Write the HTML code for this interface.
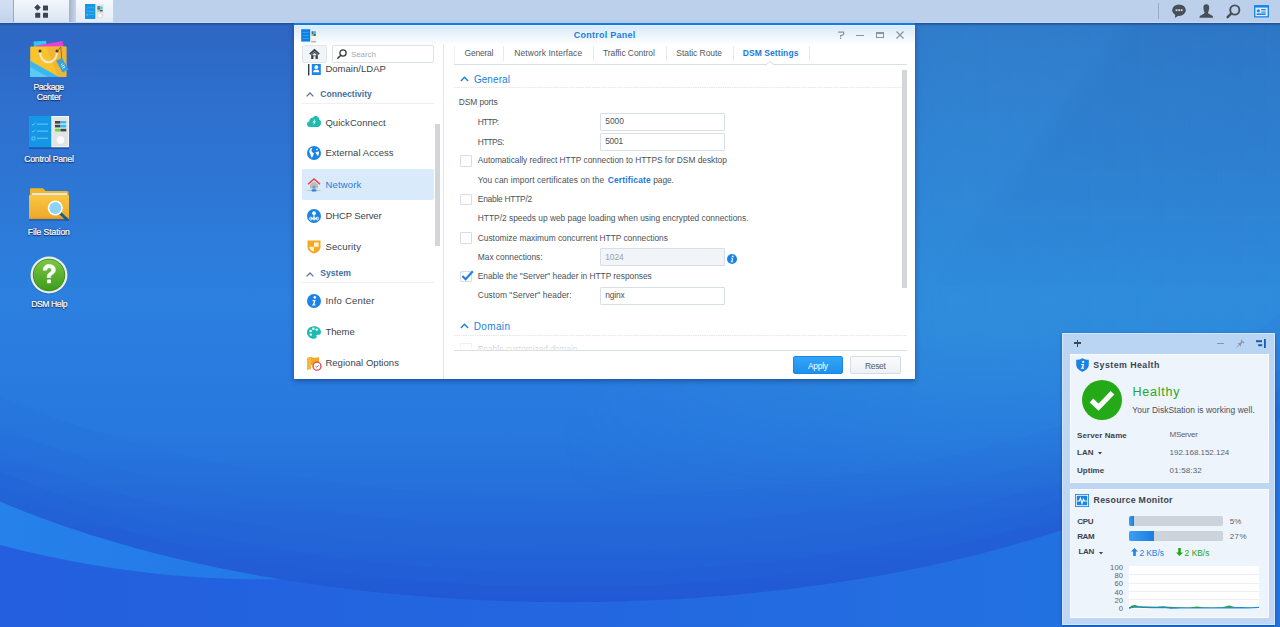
<!DOCTYPE html>
<html><head><meta charset="utf-8"><style>
*{margin:0;padding:0;box-sizing:border-box}
html,body{width:1280px;height:627px;overflow:hidden}
body{position:relative;font-family:"Liberation Sans",sans-serif;background:#2F70CE}
.a{position:absolute}
.t{position:absolute;white-space:nowrap}
svg{position:absolute;overflow:visible}
.dl{color:#fff;-webkit-text-stroke:0.2px #fff;text-shadow:0 1px 1px rgba(0,0,30,.7),0 0 2px rgba(0,0,30,.5)}
</style></head><body>
<div class="a" style="left:0;top:0;width:1280px;height:627px;background:linear-gradient(180deg,#2E66C2 22px,#2E70CE 110px,#2C80DF 300px,#2778DF 430px,#2670DB 490px,#2360D6 600px)"></div>
<div class="a" style="left:0;top:0;width:1280px;height:627px;background:linear-gradient(90deg,rgba(52,160,215,0) 560px,rgba(52,160,215,0.4) 950px,rgba(52,160,215,0.35) 1280px);-webkit-mask-image:linear-gradient(180deg,#000 0,#000 330px,transparent 500px)"></div>
<svg width="1280" height="627" style="left:0;top:0">
<defs><linearGradient id="gdiag" gradientUnits="userSpaceOnUse" x1="1094" y1="58" x2="1110" y2="70">
<stop offset="0" stop-color="#1A4A9A" stop-opacity="0"/><stop offset="1" stop-color="#1A4A9A" stop-opacity="0.07"/></linearGradient>
<linearGradient id="gdiagv" gradientUnits="userSpaceOnUse" x1="0" y1="150" x2="0" y2="290">
<stop offset="0" stop-color="#fff"/><stop offset="1" stop-color="#000"/></linearGradient>
<mask id="mdiag" maskUnits="userSpaceOnUse" x="0" y="0" width="1280" height="627"><rect x="0" y="0" width="1280" height="627" fill="url(#gdiagv)"/></mask></defs>
<rect x="880" y="22" width="400" height="420" fill="url(#gdiag)" mask="url(#mdiag)"/>
</svg>
<svg width="1280" height="627" style="left:0;top:0">
<defs>
<linearGradient id="gdark" gradientUnits="userSpaceOnUse" x1="0" y1="470" x2="0" y2="606">
<stop offset="0" stop-color="#2560D8" stop-opacity="0"/>
<stop offset="1" stop-color="#215CD4" stop-opacity="1"/>
</linearGradient>
<linearGradient id="glow" gradientUnits="userSpaceOnUse" x1="0" y1="0" x2="1100" y2="0">
<stop offset="0" stop-color="#235FDE"/><stop offset="0.55" stop-color="#2367E0"/><stop offset="1" stop-color="#2272E1"/>
</linearGradient>
<linearGradient id="gdarkh" gradientUnits="userSpaceOnUse" x1="0" y1="0" x2="1100" y2="0">
<stop offset="0" stop-color="#215AD4"/><stop offset="0.6" stop-color="#215CD4"/><stop offset="1" stop-color="#2468D9"/>
</linearGradient>
<mask id="mdark" maskUnits="userSpaceOnUse" x="0" y="0" width="1280" height="627">
<rect x="0" y="0" width="1280" height="627" fill="url(#gmask)"/>
</mask>
<linearGradient id="gmask" gradientUnits="userSpaceOnUse" x1="0" y1="480" x2="0" y2="606">
<stop offset="0" stop-color="#000"/><stop offset="0.7" stop-color="#777"/><stop offset="1" stop-color="#fff"/>
</linearGradient>
<linearGradient id="gband" gradientUnits="userSpaceOnUse" x1="0" y1="0" x2="280" y2="0">
<stop offset="0" stop-color="#2681EA"/><stop offset="1" stop-color="#2378E7"/>
</linearGradient>
</defs>
<path d="M0,486.5 L16,493.1 L32,499.4 L48,505.4 L64,511.1 L80,516.4 L96,521.5 L112,526.4 L128,531.0 L144,535.3 L160,539.5 L176,543.4 L192,547.2 L208,550.7 L224,554.0 L240,557.2 L256,560.1 L272,562.9 L288,565.6 L304,568.0 L320,570.3 L336,572.5 L352,574.5 L368,576.3 L384,578.0 L400,579.5 L416,580.9 L432,582.2 L448,583.3 L464,584.3 L480,585.1 L496,585.8 L512,586.3 L528,586.8 L544,587.0 L560,587.2 L576,587.2 L592,587.1 L608,586.8 L624,586.4 L640,585.8 L656,585.2 L672,584.4 L688,583.4 L704,582.3 L720,581.1 L736,579.7 L752,578.2 L768,576.5 L784,574.7 L800,572.7 L816,570.6 L832,568.3 L848,565.8 L864,563.2 L880,560.4 L896,557.5 L912,554.3 L928,551.0 L944,547.5 L960,543.8 L976,539.9 L992,535.8 L1008,531.4 L1024,526.8 L1040,522.0 L1056,516.9 L1072,511.6 L1088,506.0 L1104,500.0 L1120,493.7 L1136,487.1 L1152,480.1 L1168,472.7 L1184,464.8 L1200,456.4 L1216,447.4 L1232,437.8 L1248,427.4 L1264,416.1 L1280,403.7 L1280,418.7 L1264,431.1 L1248,442.4 L1232,452.8 L1216,462.4 L1200,471.4 L1184,479.8 L1168,487.7 L1152,495.1 L1136,502.1 L1120,508.7 L1104,515.0 L1088,521.0 L1072,526.6 L1056,531.9 L1040,537.0 L1024,541.8 L1008,546.4 L992,550.8 L976,554.9 L960,558.8 L944,562.5 L928,566.0 L912,569.3 L896,572.5 L880,575.4 L864,578.2 L848,580.8 L832,583.3 L816,585.6 L800,587.7 L784,589.7 L768,591.5 L752,593.2 L736,594.7 L720,596.1 L704,597.3 L688,598.4 L672,599.4 L656,600.2 L640,600.8 L624,601.4 L608,601.8 L592,602.1 L576,602.2 L560,602.2 L544,602.0 L528,601.8 L512,601.3 L496,600.8 L480,600.1 L464,599.3 L448,598.3 L432,597.2 L416,595.9 L400,594.5 L384,593.0 L368,591.3 L352,589.5 L336,587.5 L320,585.3 L304,583.0 L288,580.6 L272,577.9 L256,575.1 L240,572.2 L224,569.0 L208,565.7 L192,562.2 L176,558.4 L160,554.5 L144,550.3 L128,546.0 L112,541.4 L96,536.5 L80,531.4 L64,526.1 L48,520.4 L32,514.4 L16,508.1 L0,501.5 Z" fill="#2058D4" fill-opacity="0.18"/>
<path d="M0,471.5 L16,478.1 L32,484.4 L48,490.4 L64,496.1 L80,501.4 L96,506.5 L112,511.4 L128,516.0 L144,520.3 L160,524.5 L176,528.4 L192,532.2 L208,535.7 L224,539.0 L240,542.2 L256,545.1 L272,547.9 L288,550.6 L304,553.0 L320,555.3 L336,557.5 L352,559.5 L368,561.3 L384,563.0 L400,564.5 L416,565.9 L432,567.2 L448,568.3 L464,569.3 L480,570.1 L496,570.8 L512,571.3 L528,571.8 L544,572.0 L560,572.2 L576,572.2 L592,572.1 L608,571.8 L624,571.4 L640,570.8 L656,570.2 L672,569.4 L688,568.4 L704,567.3 L720,566.1 L736,564.7 L752,563.2 L768,561.5 L784,559.7 L800,557.7 L816,555.6 L832,553.3 L848,550.8 L864,548.2 L880,545.4 L896,542.5 L912,539.3 L928,536.0 L944,532.5 L960,528.8 L976,524.9 L992,520.8 L1008,516.4 L1024,511.8 L1040,507.0 L1056,501.9 L1072,496.6 L1088,491.0 L1104,485.0 L1120,478.7 L1136,472.1 L1152,465.1 L1168,457.7 L1184,449.8 L1200,441.4 L1216,432.4 L1232,422.8 L1248,412.4 L1264,401.1 L1280,388.7 L1280,418.7 L1264,431.1 L1248,442.4 L1232,452.8 L1216,462.4 L1200,471.4 L1184,479.8 L1168,487.7 L1152,495.1 L1136,502.1 L1120,508.7 L1104,515.0 L1088,521.0 L1072,526.6 L1056,531.9 L1040,537.0 L1024,541.8 L1008,546.4 L992,550.8 L976,554.9 L960,558.8 L944,562.5 L928,566.0 L912,569.3 L896,572.5 L880,575.4 L864,578.2 L848,580.8 L832,583.3 L816,585.6 L800,587.7 L784,589.7 L768,591.5 L752,593.2 L736,594.7 L720,596.1 L704,597.3 L688,598.4 L672,599.4 L656,600.2 L640,600.8 L624,601.4 L608,601.8 L592,602.1 L576,602.2 L560,602.2 L544,602.0 L528,601.8 L512,601.3 L496,600.8 L480,600.1 L464,599.3 L448,598.3 L432,597.2 L416,595.9 L400,594.5 L384,593.0 L368,591.3 L352,589.5 L336,587.5 L320,585.3 L304,583.0 L288,580.6 L272,577.9 L256,575.1 L240,572.2 L224,569.0 L208,565.7 L192,562.2 L176,558.4 L160,554.5 L144,550.3 L128,546.0 L112,541.4 L96,536.5 L80,531.4 L64,526.1 L48,520.4 L32,514.4 L16,508.1 L0,501.5 Z" fill="#2058D4" fill-opacity="0.14"/>
<path d="M0,451.5 L16,458.1 L32,464.4 L48,470.4 L64,476.1 L80,481.4 L96,486.5 L112,491.4 L128,496.0 L144,500.3 L160,504.5 L176,508.4 L192,512.2 L208,515.7 L224,519.0 L240,522.2 L256,525.1 L272,527.9 L288,530.6 L304,533.0 L320,535.3 L336,537.5 L352,539.5 L368,541.3 L384,543.0 L400,544.5 L416,545.9 L432,547.2 L448,548.3 L464,549.3 L480,550.1 L496,550.8 L512,551.3 L528,551.8 L544,552.0 L560,552.2 L576,552.2 L592,552.1 L608,551.8 L624,551.4 L640,550.8 L656,550.2 L672,549.4 L688,548.4 L704,547.3 L720,546.1 L736,544.7 L752,543.2 L768,541.5 L784,539.7 L800,537.7 L816,535.6 L832,533.3 L848,530.8 L864,528.2 L880,525.4 L896,522.5 L912,519.3 L928,516.0 L944,512.5 L960,508.8 L976,504.9 L992,500.8 L1008,496.4 L1024,491.8 L1040,487.0 L1056,481.9 L1072,476.6 L1088,471.0 L1104,465.0 L1120,458.7 L1136,452.1 L1152,445.1 L1168,437.7 L1184,429.8 L1200,421.4 L1216,412.4 L1232,402.8 L1248,392.4 L1264,381.1 L1280,368.7 L1280,418.7 L1264,431.1 L1248,442.4 L1232,452.8 L1216,462.4 L1200,471.4 L1184,479.8 L1168,487.7 L1152,495.1 L1136,502.1 L1120,508.7 L1104,515.0 L1088,521.0 L1072,526.6 L1056,531.9 L1040,537.0 L1024,541.8 L1008,546.4 L992,550.8 L976,554.9 L960,558.8 L944,562.5 L928,566.0 L912,569.3 L896,572.5 L880,575.4 L864,578.2 L848,580.8 L832,583.3 L816,585.6 L800,587.7 L784,589.7 L768,591.5 L752,593.2 L736,594.7 L720,596.1 L704,597.3 L688,598.4 L672,599.4 L656,600.2 L640,600.8 L624,601.4 L608,601.8 L592,602.1 L576,602.2 L560,602.2 L544,602.0 L528,601.8 L512,601.3 L496,600.8 L480,600.1 L464,599.3 L448,598.3 L432,597.2 L416,595.9 L400,594.5 L384,593.0 L368,591.3 L352,589.5 L336,587.5 L320,585.3 L304,583.0 L288,580.6 L272,577.9 L256,575.1 L240,572.2 L224,569.0 L208,565.7 L192,562.2 L176,558.4 L160,554.5 L144,550.3 L128,546.0 L112,541.4 L96,536.5 L80,531.4 L64,526.1 L48,520.4 L32,514.4 L16,508.1 L0,501.5 Z" fill="#2058D4" fill-opacity="0.1"/>
<path d="M0,426.5 L16,433.1 L32,439.4 L48,445.4 L64,451.1 L80,456.4 L96,461.5 L112,466.4 L128,471.0 L144,475.3 L160,479.5 L176,483.4 L192,487.2 L208,490.7 L224,494.0 L240,497.2 L256,500.1 L272,502.9 L288,505.6 L304,508.0 L320,510.3 L336,512.5 L352,514.5 L368,516.3 L384,518.0 L400,519.5 L416,520.9 L432,522.2 L448,523.3 L464,524.3 L480,525.1 L496,525.8 L512,526.3 L528,526.8 L544,527.0 L560,527.2 L576,527.2 L592,527.1 L608,526.8 L624,526.4 L640,525.8 L656,525.2 L672,524.4 L688,523.4 L704,522.3 L720,521.1 L736,519.7 L752,518.2 L768,516.5 L784,514.7 L800,512.7 L816,510.6 L832,508.3 L848,505.8 L864,503.2 L880,500.4 L896,497.5 L912,494.3 L928,491.0 L944,487.5 L960,483.8 L976,479.9 L992,475.8 L1008,471.4 L1024,466.8 L1040,462.0 L1056,456.9 L1072,451.6 L1088,446.0 L1104,440.0 L1120,433.7 L1136,427.1 L1152,420.1 L1168,412.7 L1184,404.8 L1200,396.4 L1216,387.4 L1232,377.8 L1248,367.4 L1264,356.1 L1280,343.7 L1280,418.7 L1264,431.1 L1248,442.4 L1232,452.8 L1216,462.4 L1200,471.4 L1184,479.8 L1168,487.7 L1152,495.1 L1136,502.1 L1120,508.7 L1104,515.0 L1088,521.0 L1072,526.6 L1056,531.9 L1040,537.0 L1024,541.8 L1008,546.4 L992,550.8 L976,554.9 L960,558.8 L944,562.5 L928,566.0 L912,569.3 L896,572.5 L880,575.4 L864,578.2 L848,580.8 L832,583.3 L816,585.6 L800,587.7 L784,589.7 L768,591.5 L752,593.2 L736,594.7 L720,596.1 L704,597.3 L688,598.4 L672,599.4 L656,600.2 L640,600.8 L624,601.4 L608,601.8 L592,602.1 L576,602.2 L560,602.2 L544,602.0 L528,601.8 L512,601.3 L496,600.8 L480,600.1 L464,599.3 L448,598.3 L432,597.2 L416,595.9 L400,594.5 L384,593.0 L368,591.3 L352,589.5 L336,587.5 L320,585.3 L304,583.0 L288,580.6 L272,577.9 L256,575.1 L240,572.2 L224,569.0 L208,565.7 L192,562.2 L176,558.4 L160,554.5 L144,550.3 L128,546.0 L112,541.4 L96,536.5 L80,531.4 L64,526.1 L48,520.4 L32,514.4 L16,508.1 L0,501.5 Z" fill="#2058D4" fill-opacity="0.08"/>
<path d="M0,396.5 L16,403.1 L32,409.4 L48,415.4 L64,421.1 L80,426.4 L96,431.5 L112,436.4 L128,441.0 L144,445.3 L160,449.5 L176,453.4 L192,457.2 L208,460.7 L224,464.0 L240,467.2 L256,470.1 L272,472.9 L288,475.6 L304,478.0 L320,480.3 L336,482.5 L352,484.5 L368,486.3 L384,488.0 L400,489.5 L416,490.9 L432,492.2 L448,493.3 L464,494.3 L480,495.1 L496,495.8 L512,496.3 L528,496.8 L544,497.0 L560,497.2 L576,497.2 L592,497.1 L608,496.8 L624,496.4 L640,495.8 L656,495.2 L672,494.4 L688,493.4 L704,492.3 L720,491.1 L736,489.7 L752,488.2 L768,486.5 L784,484.7 L800,482.7 L816,480.6 L832,478.3 L848,475.8 L864,473.2 L880,470.4 L896,467.5 L912,464.3 L928,461.0 L944,457.5 L960,453.8 L976,449.9 L992,445.8 L1008,441.4 L1024,436.8 L1040,432.0 L1056,426.9 L1072,421.6 L1088,416.0 L1104,410.0 L1120,403.7 L1136,397.1 L1152,390.1 L1168,382.7 L1184,374.8 L1200,366.4 L1216,357.4 L1232,347.8 L1248,337.4 L1264,326.1 L1280,313.7 L1280,418.7 L1264,431.1 L1248,442.4 L1232,452.8 L1216,462.4 L1200,471.4 L1184,479.8 L1168,487.7 L1152,495.1 L1136,502.1 L1120,508.7 L1104,515.0 L1088,521.0 L1072,526.6 L1056,531.9 L1040,537.0 L1024,541.8 L1008,546.4 L992,550.8 L976,554.9 L960,558.8 L944,562.5 L928,566.0 L912,569.3 L896,572.5 L880,575.4 L864,578.2 L848,580.8 L832,583.3 L816,585.6 L800,587.7 L784,589.7 L768,591.5 L752,593.2 L736,594.7 L720,596.1 L704,597.3 L688,598.4 L672,599.4 L656,600.2 L640,600.8 L624,601.4 L608,601.8 L592,602.1 L576,602.2 L560,602.2 L544,602.0 L528,601.8 L512,601.3 L496,600.8 L480,600.1 L464,599.3 L448,598.3 L432,597.2 L416,595.9 L400,594.5 L384,593.0 L368,591.3 L352,589.5 L336,587.5 L320,585.3 L304,583.0 L288,580.6 L272,577.9 L256,575.1 L240,572.2 L224,569.0 L208,565.7 L192,562.2 L176,558.4 L160,554.5 L144,550.3 L128,546.0 L112,541.4 L96,536.5 L80,531.4 L64,526.1 L48,520.4 L32,514.4 L16,508.1 L0,501.5 Z" fill="#2058D4" fill-opacity="0.06"/>

<path d="M0,501.5 L8,504.8 L16,508.1 L24,511.3 L32,514.4 L40,517.5 L48,520.4 L56,523.3 L64,526.1 L72,528.8 L80,531.4 L88,534.0 L96,536.5 L104,539.0 L112,541.4 L120,543.7 L128,546.0 L136,548.2 L144,550.3 L152,552.4 L160,554.5 L168,556.5 L176,558.4 L184,560.3 L192,562.2 L200,563.9 L208,565.7 L216,567.4 L224,569.0 L232,570.6 L240,572.2 L248,573.7 L256,575.1 L264,576.6 L272,577.9 L280,579.3 L288,580.6 L296,581.8 L304,583.0 L312,584.2 L320,585.3 L328,586.4 L336,587.5 L344,588.5 L352,589.5 L360,590.4 L368,591.3 L376,592.2 L384,593.0 L392,593.8 L400,594.5 L408,595.3 L416,595.9 L424,596.6 L432,597.2 L440,597.8 L448,598.3 L456,598.8 L464,599.3 L472,599.7 L480,600.1 L488,600.5 L496,600.8 L504,601.1 L512,601.3 L520,601.6 L528,601.8 L536,601.9 L544,602.0 L552,602.1 L560,602.2 L568,602.2 L576,602.2 L584,602.1 L592,602.1 L600,601.9 L608,601.8 L616,601.6 L624,601.4 L632,601.1 L640,600.8 L648,600.5 L656,600.2 L664,599.8 L672,599.4 L680,598.9 L688,598.4 L696,597.9 L704,597.3 L712,596.7 L720,596.1 L728,595.4 L736,594.7 L744,593.9 L752,593.2 L760,592.3 L768,591.5 L776,590.6 L784,589.7 L792,588.7 L800,587.7 L808,586.6 L816,585.6 L824,584.4 L832,583.3 L840,582.1 L848,580.8 L856,579.5 L864,578.2 L872,576.8 L880,575.4 L888,574.0 L896,572.5 L904,570.9 L912,569.3 L920,567.7 L928,566.0 L936,564.3 L944,562.5 L952,560.7 L960,558.8 L968,556.9 L976,554.9 L984,552.8 L992,550.8 L1000,548.6 L1008,546.4 L1016,544.1 L1024,541.8 L1032,539.5 L1040,537.0 L1048,534.5 L1056,531.9 L1064,529.3 L1072,526.6 L1080,523.8 L1088,521.0 L1096,518.0 L1104,515.0 L1112,511.9 L1120,508.7 L1128,505.5 L1136,502.1 L1144,498.7 L1152,495.1 L1160,491.5 L1168,487.7 L1176,483.8 L1184,479.8 L1192,475.7 L1200,471.4 L1208,467.0 L1216,462.4 L1224,457.7 L1232,452.8 L1240,447.7 L1248,442.4 L1256,436.9 L1264,431.1 L1272,425.1 L1280,418.7 L1280,627 L0,627 Z" fill="url(#glow)"/>
<path d="M0,501.5 L5,503.6 L10,505.7 L15,507.7 L20,509.7 L25,511.7 L30,513.7 L35,515.6 L40,517.5 L45,519.3 L50,521.1 L55,522.9 L60,524.7 L65,526.4 L70,528.1 L75,529.8 L80,531.4 L85,533.1 L90,534.7 L95,536.2 L100,537.8 L105,539.3 L110,540.8 L115,542.3 L120,543.7 L125,545.1 L130,546.5 L135,547.9 L140,549.3 L145,550.6 L150,551.9 L155,553.2 L160,554.5 L165,555.7 L170,557.0 L175,558.2 L180,559.4 L185,560.5 L190,561.7 L195,562.8 L200,563.9 L205,565.0 L210,566.1 L215,567.2 L220,568.2 L225,569.2 L230,570.2 L235,571.2 L240,572.2 L245,573.1 L250,574.1 L255,575.0 L260,575.9 L265,576.7 L270,577.6 L275,578.5 L280,579.3 L280,579.2 L275,579.2 L270,579.3 L265,579.3 L260,579.3 L255,579.3 L250,579.2 L245,579.1 L240,579.0 L235,578.9 L230,578.7 L225,578.5 L220,578.3 L215,578.1 L210,577.9 L205,577.6 L200,577.3 L195,577.0 L190,576.6 L185,576.2 L180,575.8 L175,575.4 L170,575.0 L165,574.5 L160,574.0 L155,573.5 L150,572.9 L145,572.3 L140,571.7 L135,571.1 L130,570.5 L125,569.8 L120,569.1 L115,568.4 L110,567.6 L105,566.9 L100,566.1 L95,565.2 L90,564.4 L85,563.5 L80,562.6 L75,561.7 L70,560.8 L65,559.8 L60,558.8 L55,557.8 L50,556.7 L45,555.7 L40,554.6 L35,553.5 L30,552.3 L25,551.2 L20,550.0 L15,548.8 L10,547.5 L5,546.3 L0,545.0 Z" fill="url(#gband)"/>
</svg>
<div class="a" style="left:0px;top:0px;width:1280px;height:23px;background:#BDD0EB;border-bottom:1px solid #C9D9EE"></div>
<div class="a" style="left:0px;top:23px;width:1280px;height:3px;background:linear-gradient(180deg,#1F4C98,rgba(45,104,198,0))"></div>
<div class="a" style="left:0px;top:0px;width:13px;height:22px;background:linear-gradient(180deg,#D3E0F1,#C2D4EC)"></div>
<div class="a" style="left:12.5px;top:0px;width:1px;height:22px;background:#98A8BE"></div>
<div class="a" style="left:14px;top:0px;width:55px;height:22px;background:linear-gradient(180deg,#F3F6FB,#DAE5F3)"></div>
<div class="a" style="left:69px;top:0px;width:7px;height:22px;background:linear-gradient(90deg,#A3B3CA,#C9D6E8)"></div>
<div class="a" style="left:76px;top:0px;width:37px;height:22px;background:linear-gradient(180deg,#F6F9FD,#E3ECF7)"></div>
<div class="a" style="left:113px;top:0px;width:1px;height:22px;background:#C5D2E2"></div>
<svg width="16" height="15" style="left:33.5px;top:3.5px" viewBox="0 0 16 15">
<rect x="1.2" y="1.2" width="4.6" height="4.6" fill="#3C4450" transform="rotate(45 3.5 3.5)"/>
<rect x="9" y="1.5" width="5" height="5" rx="0.6" fill="#3C4450"/>
<rect x="1.2" y="8.8" width="5" height="5" rx="0.6" fill="#3C4450"/>
<rect x="9" y="8.8" width="5" height="5" rx="0.6" fill="#3C4450"/>
</svg>
<svg width="19" height="15" style="left:85px;top:4px" viewBox="0 0 40 31.3" preserveAspectRatio="none">
<rect x="0" y="0" width="22.3" height="31.3" fill="#1497E7"/>
<rect x="22.3" y="0" width="17.7" height="31.3" fill="#F4F4F4"/>
<rect x="23.5" y="1" width="15.5" height="29.3" fill="#E2E3E4"/>
<rect x="26" y="5" width="5.5" height="2.6" fill="#3E4650"/><rect x="31.5" y="5" width="5.8" height="2.6" rx="1" fill="#27C3F4"/>
<rect x="26" y="8.8" width="5.5" height="2.6" fill="#3E4650"/><rect x="31.5" y="8.8" width="5.8" height="2.6" rx="1" fill="#27C3F4"/>
<rect x="26" y="12.8" width="5.5" height="2.6" rx="1" fill="#5BE02F"/><rect x="31.5" y="12.8" width="5.8" height="2.6" fill="#3E4650"/>
<circle cx="31.5" cy="24" r="4.4" fill="#FAFAFA" stroke="#D4D6D8" stroke-width="0.6"/>
<path d="M3,8 l1.2,1.2 l2.4,-2.6" stroke="#6CCBF7" stroke-width="0.9" fill="none"/>
<rect x="8" y="7.6" width="11" height="1" fill="#6CCBF7"/>
<path d="M3,15 l1.2,1.2 l2.4,-2.6" stroke="#6CCBF7" stroke-width="0.9" fill="none"/>
<rect x="8" y="14.6" width="11" height="1" fill="#6CCBF7"/>
<rect x="3" y="21" width="3" height="3" stroke="#6CCBF7" stroke-width="0.8" fill="none"/>
<rect x="8" y="21.8" width="11" height="1" fill="#6CCBF7"/>
</svg>
<div class="a" style="left:1158px;top:3px;width:1px;height:16px;background:#9AAAC0"></div>
<svg width="15" height="15" style="left:1172px;top:4px" viewBox="0 0 15 15">
<ellipse cx="7" cy="6.2" rx="6.8" ry="5.8" fill="#474E58"/>
<path d="M3.5,10 L2.8,14 L7.5,11 Z" fill="#474E58"/>
<rect x="3.6" y="5.3" width="1.8" height="1.8" fill="#D5DEEA"/>
<rect x="6.2" y="5.3" width="1.8" height="1.8" fill="#D5DEEA"/>
<rect x="8.8" y="5.3" width="1.8" height="1.8" fill="#D5DEEA"/>
</svg>
<svg width="15" height="15" style="left:1199px;top:4px" viewBox="0 0 15 15">
<path d="M7.3,0.3 C5,0.3 4.4,2 4.4,3.8 C4.4,5.8 5.2,7.6 5.6,8.6 C5.8,9.4 4.6,10.2 2.6,11 C0.8,11.8 0.4,12.6 0.4,13.8 L14.2,13.8 C14.2,12.6 13.8,11.8 12,11 C10,10.2 8.8,9.4 9,8.6 C9.4,7.6 10.2,5.8 10.2,3.8 C10.2,2 9.6,0.3 7.3,0.3 Z" fill="#474E58"/>
</svg>
<svg width="15" height="15" style="left:1226px;top:4px" viewBox="0 0 15 15">
<circle cx="8.8" cy="6" r="4.6" fill="none" stroke="#474E58" stroke-width="1.9"/>
<path d="M5.4,9.4 L1.6,13.2" stroke="#474E58" stroke-width="2.4" stroke-linecap="round"/>
</svg>
<svg width="15" height="12.5" style="left:1254px;top:4.5px" viewBox="0 0 15 12.5">
<rect x="0" y="0" width="15" height="12.5" rx="0.6" fill="#1A86E8"/>
<rect x="1.4" y="2.6" width="12.2" height="8.6" fill="#E4EEF8"/>
<circle cx="4.3" cy="5.8" r="1.6" fill="#1A86E8"/>
<rect x="7.2" y="4" width="4.6" height="1.3" fill="#1A86E8"/>
<rect x="7.2" y="6.5" width="4.6" height="1.1" fill="#1A86E8"/>
<rect x="2.6" y="8.4" width="9.2" height="1.6" fill="#1A86E8"/>
</svg>
<svg width="46" height="44" style="left:26px;top:36px" viewBox="0 0 46 44">
<path d="M7.5,5.5 L20,4.8 L21,11 L8,11 Z" fill="#35C6F0"/>
<path d="M9.6,9.8 L36.5,5 L37.6,10.6 L10.4,11.8 Z" fill="#E63FDC"/>
<rect x="4.2" y="10.4" width="36.2" height="30.6" rx="1" fill="#F7C52A"/>
<path d="M20,10.4 L40.4,10.4 L40.4,41 L32,41 Z" fill="#F2AE37" opacity="0.75"/>
<path d="M4.2,24.8 L33,41 L4.2,41 Z" fill="#3DB5EE"/>
<path d="M4.2,31 L22,41 L4.2,41 Z" fill="#5ACBF6"/>
<path d="M14,15.2 C14,30 31,30 31,15.2" fill="none" stroke="#F4E6D6" stroke-width="2"/>
<circle cx="14" cy="15" r="1.5" fill="#4A2F12"/><circle cx="31" cy="15" r="1.5" fill="#4A2F12"/>
<path d="M31,15.4 L34.8,11 L35.8,24" fill="none" stroke="#8A6A28" stroke-width="0.9"/>
<path d="M30.2,24.8 L36,22 L42.6,33.6 L36.6,36.6 Z" fill="#2AA6EA"/>
<circle cx="34.2" cy="25.4" r="0.9" fill="#E07A22"/>
<path d="M35,28.6 L36.6,27.8 M35.6,30.4 L38.4,29 M36.4,32.2 L39,30.8" stroke="#fff" stroke-width="0.9"/>
</svg>
<div class="t dl" style="left:33.4px;top:83.00px;font-size:8.6px;line-height:8.6px;color:#fff;letter-spacing:-0.461px;">Package</div>
<div class="t dl" style="left:36.8px;top:93.00px;font-size:8.6px;line-height:8.6px;color:#fff;letter-spacing:-0.263px;">Center</div>
<div class="a" style="left:29px;top:147px;width:40px;height:2px;background:rgba(20,40,110,.45)"></div>
<svg width="40" height="31.3" style="left:29px;top:115.7px" viewBox="0 0 40 31.3" preserveAspectRatio="none">
<rect x="0" y="0" width="22.3" height="31.3" fill="#1497E7"/>
<rect x="22.3" y="0" width="17.7" height="31.3" fill="#F4F4F4"/>
<rect x="23.5" y="1" width="15.5" height="29.3" fill="#E2E3E4"/>
<rect x="26" y="5" width="5.5" height="2.6" fill="#3E4650"/><rect x="31.5" y="5" width="5.8" height="2.6" rx="1" fill="#27C3F4"/>
<rect x="26" y="8.8" width="5.5" height="2.6" fill="#3E4650"/><rect x="31.5" y="8.8" width="5.8" height="2.6" rx="1" fill="#27C3F4"/>
<rect x="26" y="12.8" width="5.5" height="2.6" rx="1" fill="#5BE02F"/><rect x="31.5" y="12.8" width="5.8" height="2.6" fill="#3E4650"/>
<circle cx="31.5" cy="24" r="4.4" fill="#FAFAFA" stroke="#D4D6D8" stroke-width="0.6"/>
<path d="M3,8 l1.2,1.2 l2.4,-2.6" stroke="#6CCBF7" stroke-width="0.9" fill="none"/>
<rect x="8" y="7.6" width="11" height="1" fill="#6CCBF7"/>
<path d="M3,15 l1.2,1.2 l2.4,-2.6" stroke="#6CCBF7" stroke-width="0.9" fill="none"/>
<rect x="8" y="14.6" width="11" height="1" fill="#6CCBF7"/>
<rect x="3" y="21" width="3" height="3" stroke="#6CCBF7" stroke-width="0.8" fill="none"/>
<rect x="8" y="21.8" width="11" height="1" fill="#6CCBF7"/>
</svg>
<div class="t dl" style="left:24.2px;top:155.00px;font-size:8.6px;line-height:8.6px;color:#fff;letter-spacing:-0.192px;">Control Panel</div>
<svg width="41" height="34" style="left:29px;top:188px" viewBox="0 0 41 34">
<path d="M1,1.5 Q1,0.2 2.2,0.2 L14,0.2 L16.5,3 L38,3 Q39.5,3 39.5,4.5 L39.5,8 L1,8 Z" fill="#F1B52C"/>
<rect x="3" y="5" width="35" height="5" fill="#E6E6E6"/>
<defs><linearGradient id="fg" x1="0" y1="0" x2="0" y2="1"><stop offset="0" stop-color="#FAC640"/><stop offset="1" stop-color="#EEA82B"/></linearGradient></defs>
<path d="M0,8 Q0,7 1,7 L39,7 Q40,7 40,8 L40,31 L0,31 Z" fill="url(#fg)"/>
<rect x="0" y="29.6" width="40" height="1.6" fill="#DE9C1E"/>
<rect x="0" y="31.2" width="40" height="1.4" fill="rgba(20,40,110,.4)"/>
<path d="M31,25 L38,31.5" stroke="#1B5D86" stroke-width="3" stroke-linecap="round"/>
<circle cx="26.3" cy="20" r="7.6" fill="#FFFFFF"/>
<circle cx="26.3" cy="20" r="6" fill="#8ED3F5"/>
</svg>
<div class="t dl" style="left:27.8px;top:228.00px;font-size:8.6px;line-height:8.6px;color:#fff;letter-spacing:-0.084px;">File Station</div>
<svg width="38" height="38" style="left:30px;top:256px" viewBox="0 0 38 38">
<defs><linearGradient id="hg" x1="0" y1="0" x2="0" y2="1"><stop offset="0" stop-color="#7CC641"/><stop offset="1" stop-color="#3E9B1E"/></linearGradient></defs>
<circle cx="19" cy="19.6" r="18.6" fill="rgba(20,40,110,.35)"/>
<circle cx="19" cy="19" r="18.5" fill="#E8EEF0"/>
<circle cx="19" cy="19" r="16.2" fill="#3C8E1E"/><circle cx="19" cy="19" r="15.4" fill="url(#hg)"/>
<path stroke="#FFFFFF" stroke-width="0.6" d="M13.2,14.2 C13.2,10.4 15.8,8.4 19.2,8.4 C22.8,8.4 25.4,10.6 25.4,13.8 C25.4,16.4 23.8,17.6 22.2,18.6 C21,19.4 20.8,20 20.8,21.6 L17.2,21.6 C17.2,19.2 17.6,18 19.4,16.8 C20.8,15.8 21.6,15.2 21.6,13.9 C21.6,12.6 20.6,11.8 19.2,11.8 C17.7,11.8 16.8,12.8 16.8,14.2 Z" fill="#FFFFFF"/>
<rect x="17.1" y="23.4" width="3.8" height="3.8" rx="0.6" fill="#FFFFFF"/>
</svg>
<div class="t dl" style="left:31.2px;top:300.00px;font-size:8.6px;line-height:8.6px;color:#fff;letter-spacing:-0.412px;">DSM Help</div>
<div class="a" style="left:294px;top:23px;width:621px;height:356px;background:#fff;box-shadow:0 2px 5px rgba(10,30,90,.45)"></div>
<div class="a" style="left:294px;top:23px;width:621px;height:2px;background:#0F7FDF"></div>
<div class="a" style="left:294px;top:25px;width:621px;height:20px;background:linear-gradient(180deg,#E8F2FC 0,#DAEBFA 2px,#FFFFFF 20px)"></div>
<svg width="16" height="14" style="left:301px;top:28.5px" viewBox="0 0 16 14">
<rect x="0.2" y="0.2" width="9" height="12.4" fill="#0C80E4"/>
<rect x="1.6" y="3" width="6" height="0.8" fill="#3DA4F0"/><rect x="1.6" y="6" width="6" height="0.8" fill="#3DA4F0"/><rect x="1.6" y="9" width="6" height="0.8" fill="#3DA4F0"/>
<rect x="10" y="1.2" width="5.2" height="12" fill="#EEF0F2"/>
<rect x="10.6" y="2.2" width="1.8" height="3" fill="#6A5A7A"/><rect x="12.4" y="2.2" width="2.4" height="3" fill="#2EB6EC"/>
<rect x="10.6" y="5.2" width="2" height="1.6" fill="#5BD43A"/><rect x="12.6" y="5.2" width="2.2" height="1.6" fill="#3A4450"/>
<rect x="10.2" y="12.2" width="5" height="1.2" fill="#A8ADB2"/>
</svg>
<div class="t " style="left:573.75px;top:31.00px;font-size:9px;line-height:9px;color:#1B7EDE;font-weight:bold;letter-spacing:0.250px;">Control Panel</div>
<svg width="8" height="8" style="left:837px;top:31px" viewBox="0 0 8 8">
<path d="M1,1.2 L6.6,1.2 L6.6,3.6 L3.6,4.6 L3.6,6" fill="none" stroke="#8C949C" stroke-width="1.2"/>
<rect x="3" y="6.6" width="1.3" height="1.3" fill="#8C949C"/></svg>
<div class="a" style="left:856px;top:34.5px;width:8px;height:1.6px;background:#8C949C"></div>
<div class="a" style="left:876px;top:31.8px;width:8px;height:6.6px;border:1.3px solid #8C949C;border-top-width:2.2px"></div>
<svg width="8" height="8" style="left:896px;top:31px" viewBox="0 0 8 8">
<path d="M0.5,0.5 L7.5,7.5 M7.5,0.5 L0.5,7.5" stroke="#8C949C" stroke-width="1.2"/></svg>
<div class="a" style="left:443px;top:44px;width:1px;height:335px;background:#E4E8EC"></div>
<div class="a" style="left:294px;top:63px;width:149px;height:316px;overflow:hidden">
<div class="t " style="left:31.399999999999977px;top:1.00px;font-size:9.5px;line-height:9.5px;color:#3C434B;letter-spacing:0.031px;">Domain/LDAP</div>
<svg width="14" height="12" style="left:13.5px;top:0.5px" viewBox="0 0 14 12">
<rect x="0" y="0" width="1.4" height="11.5" fill="#333A44"/>
<rect x="3.8" y="0" width="9" height="11" fill="#1A86E6"/>
<circle cx="8.3" cy="3.2" r="1.9" fill="#fff"/>
<path d="M5.3,8.2 C5.3,6.4 6.3,5.8 8.3,5.8 C10.3,5.8 11.3,6.4 11.3,8.2 Z" fill="#fff"/></svg>
<svg width="8" height="5" style="left:12px;top:29.200000000000003px" viewBox="0 0 8 5"><path d="M0.6,4.4 L4,1 L7.4,4.4" fill="none" stroke="#5A7896" stroke-width="1.3"/></svg>
<div class="t " style="left:26.30000000000001px;top:27.00px;font-size:8.6px;line-height:8.6px;color:#3F709F;font-weight:bold;letter-spacing:-0.001px;">Connectivity</div>
<div class="a" style="left:7px;top:40px;width:133px;height:1px;background:#EEF1F4"></div>
<div class="a" style="left:7.5px;top:106px;width:132px;height:31px;background:#D9EAFB;border-radius:2px"></div>
<div class="t " style="left:31.399999999999977px;top:55.00px;font-size:9.5px;line-height:9.5px;color:#3C434B;letter-spacing:0.048px;">QuickConnect</div>
<div class="t " style="left:31.399999999999977px;top:85.00px;font-size:9.5px;line-height:9.5px;color:#3C434B;letter-spacing:0.044px;">External Access</div>
<div class="t " style="left:31.399999999999977px;top:117.00px;font-size:9.5px;line-height:9.5px;color:#2A7AD6;letter-spacing:0.176px;">Network</div>
<div class="t " style="left:31.399999999999977px;top:148.00px;font-size:9.5px;line-height:9.5px;color:#3C434B;letter-spacing:-0.107px;">DHCP Server</div>
<div class="t " style="left:31.399999999999977px;top:179.00px;font-size:9.5px;line-height:9.5px;color:#3C434B;letter-spacing:0.169px;">Security</div>
<svg width="8" height="5" style="left:12px;top:208.8px" viewBox="0 0 8 5"><path d="M0.6,4.4 L4,1 L7.4,4.4" fill="none" stroke="#5A7896" stroke-width="1.3"/></svg>
<div class="t " style="left:26.19999999999999px;top:206.00px;font-size:8.6px;line-height:8.6px;color:#3F709F;font-weight:bold;letter-spacing:0.021px;">System</div>
<div class="a" style="left:7px;top:219px;width:133px;height:1px;background:#EEF1F4"></div>
<div class="t " style="left:31.399999999999977px;top:233.00px;font-size:9.5px;line-height:9.5px;color:#3C434B;letter-spacing:0.210px;">Info Center</div>
<div class="t " style="left:31.399999999999977px;top:264.00px;font-size:9.5px;line-height:9.5px;color:#3C434B;letter-spacing:-0.067px;">Theme</div>
<div class="t " style="left:31.399999999999977px;top:295.00px;font-size:9.5px;line-height:9.5px;color:#3C434B;letter-spacing:0.041px;">Regional Options</div>
<svg width="14" height="11" style="left:12.899999999999977px;top:53.3px" viewBox="0 0 14 11">
<path d="M3,11 C1.2,11 0,9.8 0,8.2 C0,6.8 1,5.8 2.2,5.6 C2.2,3.4 3.8,1.8 5.8,1.8 C6.4,0.6 7.6,0 8.8,0 C10.8,0 12.2,1.6 12.2,3.6 C13.4,4 14,5.2 14,6.8 C14,9.2 12.6,11 10.6,11 Z" fill="#1EBBAF"/>
<path d="M8.4,2.6 L5.4,6.4 L7.2,6.4 L6,9.2 L9,5.4 L7.3,5.4 Z" fill="#fff"/></svg>
<svg width="14" height="14" style="left:13px;top:83px" viewBox="0 0 14 14">
<circle cx="7" cy="7" r="7" fill="#1A84E4"/>
<path d="M2.4,4.4 C2.8,2.8 4.2,1.9 5.4,1.8 L4.4,4.2 C4.2,5.2 5.2,6.2 6.6,7 C6.9,8.6 6,10.2 5,11.8 C4,11.2 3.5,9.8 3.7,8.4 C2.8,7.6 2.1,6.2 2.4,4.4 Z" fill="#fff"/>
<path d="M8.3,6.4 L11.9,5.3 C12.1,7.4 11.6,9 10.8,10.2 C10.2,8.7 9.2,7.4 8.3,6.4 Z" fill="#fff"/>
<ellipse cx="9.9" cy="3.5" rx="0.9" ry="0.7" fill="#fff"/></svg>
<svg width="14" height="14" style="left:13px;top:114.80000000000001px" viewBox="0 0 14 14">
<path d="M1,6.2 L7,1 L13,6.2" fill="none" stroke="#EF3B45" stroke-width="1.5"/>
<path d="M3,6.6 L7,3.2 L11,6.6 L11,10.6 L3,10.6 Z" fill="#B9BEC4"/>
<rect x="5.6" y="7.6" width="2.8" height="3" fill="#8E959C"/>
<rect x="0.5" y="12" width="13" height="0.9" fill="#B9BEC4"/>
<rect x="4.6" y="11.2" width="4.8" height="2.4" rx="1.2" fill="#1A84E4"/></svg>
<svg width="14" height="14" style="left:13.300000000000011px;top:146px" viewBox="0 0 14 14">
<circle cx="7" cy="7" r="7" fill="#1A84E4"/>
<circle cx="7" cy="4.2" r="1.9" fill="#fff"/>
<path d="M7,5.6 L7,8.2 M3.6,9.6 L10.4,9.6" stroke="#fff" stroke-width="1"/>
<circle cx="3.8" cy="9.6" r="1.4" fill="none" stroke="#fff" stroke-width="0.9"/>
<circle cx="7" cy="9.6" r="1.4" fill="none" stroke="#fff" stroke-width="0.9"/>
<circle cx="10.2" cy="9.6" r="1.4" fill="none" stroke="#fff" stroke-width="0.9"/></svg>
<svg width="14" height="14" style="left:13.199999999999989px;top:177px" viewBox="0 0 14 14">
<path d="M0.5,0.6 L13.5,0.6 L13.5,7 C13.5,10.4 10.4,12.6 7,13.6 C3.6,12.6 0.5,10.4 0.5,7 Z" fill="#F7A823"/>
<path d="M7,2.4 L11.6,2.4 L11.6,6.8 L7,6.8 Z M2.4,6.8 L7,6.8 L7,11.6 C4.6,10.8 2.4,9.4 2.4,7 Z" fill="#FFF3D8"/></svg>
<svg width="14" height="14" style="left:13px;top:230.5px" viewBox="0 0 14 14">
<circle cx="7" cy="7" r="7" fill="#1A84E4"/>
<circle cx="7.8" cy="3.4" r="1.3" fill="#fff"/>
<path d="M5.6,6 L8.6,6 L7.4,10.6 L8.6,10.6 L8.4,11.6 L5,11.6 L5.2,10.6 L6,10.6 L6.8,7 L5.4,7 Z" fill="#fff"/></svg>
<svg width="14" height="13" style="left:13px;top:262.6px" viewBox="0 0 14 13">
<path d="M7,0.2 C11,0.2 14,2.8 14,6 C14,8.2 12.6,9 11,8.8 C9.6,8.6 9.2,9.6 9.6,10.6 C10,11.8 9.2,12.8 7,12.8 C3,12.8 0,10 0,6.5 C0,3 3,0.2 7,0.2 Z" fill="#1DBBB0"/>
<circle cx="3.6" cy="5" r="1.2" fill="#fff"/><circle cx="6.4" cy="2.8" r="1.2" fill="#fff"/>
<circle cx="9.8" cy="3.6" r="1.2" fill="#fff"/><circle cx="3.8" cy="8.6" r="1.2" fill="#fff"/></svg>
<svg width="15" height="14" style="left:12.800000000000011px;top:293.5px" viewBox="0 0 15 14">
<path d="M0,1 L4,0 L8,1 L12,0 L12,8 L8,9 L4,8 L0,9 Z" fill="#F7A823"/>
<path d="M0,1 L4,0 L4,12 L0,13 Z" fill="#F9B73A"/>
<circle cx="10" cy="9.2" r="4" fill="#fff" stroke="#EE3A4A" stroke-width="1.3"/>
<path d="M8.4,9 L9.8,10.2 L11.8,8.2" fill="none" stroke="#555" stroke-width="0.7"/></svg>
</div>
<div class="a" style="left:435px;top:124px;width:4.5px;height:122px;background:#D3D5D8"></div>
<div class="a" style="left:301.5px;top:45.3px;width:25px;height:17.5px;background:#F1F4F8;border:1px solid #E2E6EB;border-radius:2px"></div>
<svg width="11" height="10" style="left:309px;top:49px" viewBox="0 0 11 10">
<path d="M0.8,5.2 L5.5,0.9 L10.2,5.2" fill="none" stroke="#333B44" stroke-width="1.7" stroke-linejoin="miter"/>
<path d="M2.2,5.4 L5.5,2.6 L8.8,5.4 L8.8,9.9 L6.6,9.9 L6.6,7.2 L4.4,7.2 L4.4,9.9 L2.2,9.9 Z" fill="#333B44"/>
<path d="M3.6,5.6 L5.5,4 L7.4,5.6 L7.4,6.4 L3.6,6.4 Z" fill="#F1F4F8"/>
</svg>
<div class="a" style="left:331.5px;top:45.3px;width:102.5px;height:17.5px;background:#fff;border:1px solid #DDE2E8;border-radius:2px"></div>
<svg width="10" height="10" style="left:337px;top:48.8px" viewBox="0 0 10 10">
<circle cx="6" cy="4" r="3.1" fill="none" stroke="#333B44" stroke-width="1.3"/>
<path d="M3.8,6.2 L0.8,9.2" stroke="#333B44" stroke-width="1.6" stroke-linecap="round"/></svg>
<div class="t " style="left:350.9px;top:51.00px;font-size:8px;line-height:8px;color:#A3ACB6;letter-spacing:-0.050px;">Search</div>
<div class="a" style="left:454px;top:45.5px;width:453px;height:19px;background:#fff;border-left:1px solid #EEF0F3"></div>
<div class="a" style="left:454px;top:64px;width:453px;height:1.2px;background:#DADFE5"></div>
<div class="a" style="left:503.3px;top:46px;width:1px;height:15px;background:#E6E9ED"></div>
<div class="a" style="left:592.5px;top:46px;width:1px;height:15px;background:#E6E9ED"></div>
<div class="a" style="left:665.5px;top:46px;width:1px;height:15px;background:#E6E9ED"></div>
<div class="a" style="left:733px;top:46px;width:1px;height:15px;background:#E6E9ED"></div>
<div class="a" style="left:809px;top:46px;width:1px;height:15px;background:#E6E9ED"></div>
<div class="t " style="left:464.6px;top:49.00px;font-size:8.5px;line-height:8.5px;color:#505A64;letter-spacing:-0.240px;">General</div>
<div class="t " style="left:514.2px;top:49.00px;font-size:8.5px;line-height:8.5px;color:#505A64;letter-spacing:0.087px;">Network Interface</div>
<div class="t " style="left:602.9px;top:49.00px;font-size:8.5px;line-height:8.5px;color:#505A64;letter-spacing:-0.065px;">Traffic Control</div>
<div class="t " style="left:676.3px;top:49.00px;font-size:8.5px;line-height:8.5px;color:#505A64;letter-spacing:-0.046px;">Static Route</div>
<div class="t " style="left:742.7px;top:49.00px;font-size:8.5px;line-height:8.5px;color:#1A7ADB;font-weight:bold;letter-spacing:0.084px;">DSM Settings</div>
<svg width="10" height="5" style="left:765px;top:60.5px" viewBox="0 0 10 5">
<path d="M0,4.6 L5,0.4 L10,4.6 Z" fill="#fff"/><path d="M0,4.6 L5,0.4 L10,4.6" fill="none" stroke="#DADFE5" stroke-width="1"/></svg>
<div class="a" style="left:444px;top:65px;width:463px;height:285.3px;overflow:hidden">
<svg width="9" height="6" style="left:15.600000000000023px;top:10.799999999999997px" viewBox="0 0 9 6"><path d="M0.9,4.9 L4.5,1.3 L8.1,4.9" fill="none" stroke="#1A7FE0" stroke-width="1.4"/></svg>
<div class="t " style="left:29.9px;top:10.00px;font-size:10px;line-height:10px;color:#1A7FE0;letter-spacing:0.070px;">General</div>
<div class="a" style="left:10px;top:22px;width:453px;height:1px;background-image:linear-gradient(90deg,#E4E8EC 50%,transparent 50%);background-size:2.3px 1px"></div>
<div class="t " style="left:14.75px;top:33.00px;font-size:8.4px;line-height:8.4px;color:#4A5259;letter-spacing:-0.072px;">DSM ports</div>
<div class="t " style="left:33.75px;top:53.00px;font-size:8.4px;line-height:8.4px;color:#4A5259;letter-spacing:-0.716px;">HTTP:</div>
<div class="t " style="left:33.75px;top:73.00px;font-size:8.4px;line-height:8.4px;color:#4A5259;letter-spacing:-0.654px;">HTTPS:</div>
<div class="a" style="left:155.5px;top:48px;width:125.5px;height:17.5px;background:#fff;border:1px solid #D9DFE6;border-radius:1px"></div>
<div class="t " style="left:161.2px;top:52.00px;font-size:8.4px;line-height:8.4px;color:#4A5259;letter-spacing:0.038px;">5000</div>
<div class="a" style="left:155.5px;top:68px;width:125.5px;height:17.5px;background:#fff;border:1px solid #D9DFE6;border-radius:1px"></div>
<div class="t " style="left:161.2px;top:72.00px;font-size:8.4px;line-height:8.4px;color:#4A5259;letter-spacing:-0.229px;">5001</div>
<div class="a" style="left:16px;top:90.19999999999999px;width:11.5px;height:11.5px;background:#fff;border:1px solid #D8DDE3;border-radius:1px"></div>
<div class="t " style="left:33.8px;top:91.00px;font-size:8.4px;line-height:8.4px;color:#4A5259;letter-spacing:-0.027px;">Automatically redirect HTTP connection to HTTPS for DSM desktop</div>
<div class="t " style="left:33.8px;top:111.00px;font-size:8.4px;line-height:8.4px;color:#4A5259;letter-spacing:0.087px;">You can import certificates on the </div>
<div class="t " style="left:163.7px;top:111.00px;font-size:8.4px;line-height:8.4px;color:#1A7ADB;font-weight:bold;letter-spacing:0.202px;">Certificate</div>
<div class="t " style="left:209.2px;top:111.00px;font-size:8.4px;line-height:8.4px;color:#4A5259;letter-spacing:-0.055px;">page.</div>
<div class="a" style="left:16px;top:128.6px;width:11.5px;height:11.5px;background:#fff;border:1px solid #D8DDE3;border-radius:1px"></div>
<div class="t " style="left:33.8px;top:130.00px;font-size:8.4px;line-height:8.4px;color:#4A5259;letter-spacing:-0.236px;">Enable HTTP/2</div>
<div class="t " style="left:33.8px;top:149.00px;font-size:8.4px;line-height:8.4px;color:#4A5259;letter-spacing:-0.004px;">HTTP/2 speeds up web page loading when using encrypted connections.</div>
<div class="a" style="left:16px;top:167.4px;width:11.5px;height:11.5px;background:#fff;border:1px solid #D8DDE3;border-radius:1px"></div>
<div class="t " style="left:33.8px;top:169.00px;font-size:8.4px;line-height:8.4px;color:#4A5259;letter-spacing:-0.023px;">Customize maximum concurrent HTTP connections</div>
<div class="t " style="left:33.8px;top:188.00px;font-size:8.4px;line-height:8.4px;color:#4A5259;letter-spacing:-0.025px;">Max connections:</div>
<div class="a" style="left:155.5px;top:183.4px;width:125.5px;height:17.5px;background:#F1F4F8;border:1px solid #D9DFE6;border-radius:1px"></div>
<div class="t " style="left:161.2px;top:188.00px;font-size:8.4px;line-height:8.4px;color:#9AA2AA;letter-spacing:-0.029px;">1024</div>
<svg width="10" height="10" style="left:283.20000000000005px;top:188.5px" viewBox="0 0 10 10">
<circle cx="5" cy="5" r="5" fill="#1A84E4"/><circle cx="5.7" cy="2.4" r="0.95" fill="#fff"/>
<path d="M4.2,4.2 L6.2,4.2 L5.4,7.6 L6.2,7.6 L6,8.3 L3.6,8.3 L3.8,7.6 L4.4,7.6 L4.9,5 L4,5 Z" fill="#fff"/></svg>
<div class="a" style="left:16px;top:205.8px;width:11.5px;height:11.5px;background:#fff;border:1px solid #D8DDE3;border-radius:1px"></div>
<svg width="13" height="11" style="left:16.5px;top:204.8px" viewBox="0 0 13 11">
<path d="M1.4,6 L4.6,9.2 L11.8,1.2" fill="none" stroke="#1A7FE8" stroke-width="2.1"/></svg>
<div class="t " style="left:33.8px;top:207.00px;font-size:8.4px;line-height:8.4px;color:#4A5259;letter-spacing:-0.030px;">Enable the &quot;Server&quot; header in HTTP responses</div>
<div class="t " style="left:33.8px;top:226.00px;font-size:8.4px;line-height:8.4px;color:#4A5259;letter-spacing:0.054px;">Custom &quot;Server&quot; header:</div>
<div class="a" style="left:155.5px;top:222px;width:125.5px;height:17.5px;background:#fff;border:1px solid #D9DFE6;border-radius:1px"></div>
<div class="t " style="left:161.2px;top:226.00px;font-size:8.4px;line-height:8.4px;color:#4A5259;letter-spacing:-0.121px;">nginx</div>
<svg width="9" height="6" style="left:15.600000000000023px;top:258px" viewBox="0 0 9 6"><path d="M0.9,4.9 L4.5,1.3 L8.1,4.9" fill="none" stroke="#1A7FE0" stroke-width="1.4"/></svg>
<div class="t " style="left:29.8px;top:257.00px;font-size:10px;line-height:10px;color:#1A7FE0;letter-spacing:0.348px;">Domain</div>
<div class="a" style="left:10px;top:269.6px;width:453px;height:1px;background-image:linear-gradient(90deg,#E4E8EC 50%,transparent 50%);background-size:2.3px 1px"></div>
<div class="a" style="left:16px;top:277.5px;width:11.5px;height:11.5px;background:#fff;border:1px solid #D8DDE3;border-radius:1px"></div>
<div class="t " style="left:33.8px;top:280.00px;font-size:8.4px;line-height:8.4px;color:#4A5259;letter-spacing:-0.037px;">Enable customized domain</div>
<div class="a" style="left:0px;top:275px;width:463px;height:10.300000000000011px;background:linear-gradient(180deg,rgba(255,255,255,0.3),rgba(255,255,255,0.9))"></div>
</div>
<div class="a" style="left:902px;top:70px;width:5px;height:218px;background:#D3D5D8"></div>
<div class="a" style="left:454px;top:350.3px;width:453px;height:1.2px;background:#DADFE5"></div>
<div class="a" style="left:792.6px;top:356.4px;width:50.6px;height:17.3px;background:linear-gradient(180deg,#33A5F7,#1C91EE);border:1px solid #1A86E6;border-radius:2px"></div>
<div class="t " style="left:807.9px;top:362.00px;font-size:8.4px;line-height:8.4px;color:#fff;letter-spacing:-0.203px;">Apply</div>
<div class="a" style="left:850px;top:356.4px;width:51px;height:17.3px;background:linear-gradient(180deg,#FAFBFD,#EDF1F5);border:1px solid #D6DCE3;border-radius:2px"></div>
<div class="t " style="left:865px;top:362.00px;font-size:8.4px;line-height:8.4px;color:#505A64;letter-spacing:-0.261px;">Reset</div>
<div class="a" style="left:1062px;top:333px;width:213px;height:292px;background:linear-gradient(180deg,#BAD5F3,#BFD7F4);border:1px solid #D5E6F9;box-shadow:0 1px 3px rgba(0,20,80,.35)"></div>
<div class="a" style="left:1073.7px;top:342.4px;width:7.8px;height:1.7px;background:#3A4756"></div>
<div class="a" style="left:1076.7px;top:339.5px;width:1.7px;height:7.8px;background:#3A4756"></div>
<div class="a" style="left:1216.5px;top:342.6px;width:7px;height:1.3px;background:#8896A6"></div>
<svg width="9" height="9" style="left:1235.5px;top:339px" viewBox="0 0 9 9">
<path d="M5.2,0.4 L8.6,3.8 L7.8,4.2 L6.4,3.6 L4.8,5.4 L5,7 L4.4,7.4 L1.6,4.6 L2,4 L3.6,4.2 L5.4,2.6 L4.8,1.2 Z" fill="#8896A6"/>
<path d="M2.6,6.4 L0.4,8.6" stroke="#8896A6" stroke-width="0.9"/></svg>
<svg width="10" height="9" style="left:1255.5px;top:339px" viewBox="0 0 10 9">
<rect x="0" y="1.2" width="6" height="2" fill="#1D5CAB"/><rect x="2.2" y="5.2" width="4" height="2" fill="#1D5CAB"/>
<rect x="8" y="0" width="1.8" height="9" fill="#1D5CAB"/></svg>
<div class="a" style="left:1069.5px;top:353.7px;width:199px;height:129px;background:#EDF4FC;border:1px solid #F8FBFE"></div>
<svg width="13" height="14" style="left:1075.6px;top:358px" viewBox="0 0 13 14">
<path d="M6.5,0.2 C8.6,1.4 10.6,1.8 12.8,1.8 L12.8,6.6 C12.8,10.2 10,12.6 6.5,13.8 C3,12.6 0.2,10.2 0.2,6.6 L0.2,1.8 C2.4,1.8 4.4,1.4 6.5,0.2 Z" fill="#1A84E4"/>
<circle cx="7.2" cy="3.9" r="1.1" fill="#fff"/>
<path d="M5.2,6 L8.2,6 L7.2,9.8 L8.2,9.8 L8,10.8 L4.8,10.8 L5,9.8 L5.8,9.8 L6.6,7 L5,7 Z" fill="#fff"/></svg>
<div class="t " style="left:1093.3px;top:361.00px;font-size:8.8px;line-height:8.8px;color:#3A4450;font-weight:bold;letter-spacing:0.446px;">System Health</div>
<svg width="42" height="42" style="left:1081px;top:379px" viewBox="0 0 42 42">
<circle cx="21" cy="21" r="20.6" fill="#F4F9F2"/>
<circle cx="21" cy="21" r="20" fill="#24AA17"/>
<path d="M10.5,21.5 L17.5,28.2 L31.5,13.8" fill="none" stroke="#fff" stroke-width="5.2"/></svg>
<div class="t " style="left:1132.5px;top:386.00px;font-size:12.5px;line-height:12.5px;color:#28A81C;letter-spacing:0.770px;">Healthy</div>
<div class="t " style="left:1132.3px;top:406.00px;font-size:8.4px;line-height:8.4px;color:#48515A;letter-spacing:0.068px;">Your DiskStation is working well.</div>
<div class="t " style="left:1077px;top:432.00px;font-size:8px;line-height:8px;color:#3A4450;font-weight:bold;letter-spacing:0.088px;">Server Name</div>
<div class="t " style="left:1169.6px;top:431.00px;font-size:8px;line-height:8px;color:#5A636C;letter-spacing:-0.338px;">MServer</div>
<div class="t " style="left:1077px;top:449.00px;font-size:8px;line-height:8px;color:#3A4450;font-weight:bold;letter-spacing:0.079px;">LAN</div>
<svg width="4" height="3" style="left:1098px;top:452px" viewBox="0 0 4 3"><path d="M0,0 L4,0 L2,2.4 Z" fill="#3A4450"/></svg>
<div class="t " style="left:1169.6px;top:449.00px;font-size:8px;line-height:8px;color:#5A636C;letter-spacing:-0.026px;">192.168.152.124</div>
<div class="t " style="left:1077px;top:467.00px;font-size:8px;line-height:8px;color:#3A4450;font-weight:bold;letter-spacing:0.017px;">Uptime</div>
<div class="t " style="left:1169.6px;top:467.00px;font-size:8px;line-height:8px;color:#5A636C;letter-spacing:0.151px;">01:58:32</div>
<div class="a" style="left:1069.5px;top:488.7px;width:199px;height:129.5px;background:#EDF4FC;border:1px solid #F8FBFE"></div>
<svg width="14" height="13" style="left:1075.1px;top:493.6px" viewBox="0 0 14 13">
<rect x="0" y="0" width="14" height="13" fill="#1A84E4"/>
<rect x="1.3" y="1.3" width="11.4" height="10.4" fill="none" stroke="#fff" stroke-width="0.9"/>
<path d="M2.2,7 L4.4,7 L5.4,4.2 L7,9.4 L8.4,5.2 L9.2,7 L11.8,7" fill="none" stroke="#fff" stroke-width="1.1"/></svg>
<div class="t " style="left:1093.5px;top:496.00px;font-size:8.8px;line-height:8.8px;color:#3A4450;font-weight:bold;letter-spacing:0.279px;">Resource Monitor</div>
<div class="t " style="left:1077.2px;top:518.00px;font-size:8px;line-height:8px;color:#3A4450;font-weight:bold;letter-spacing:-0.295px;">CPU</div>
<div class="a" style="left:1129.3px;top:515.9px;width:93.6px;height:10.1px;background:#CDD3DB;border-radius:2px"></div>
<div class="a" style="left:1129.3px;top:515.9px;width:4.6px;height:10.1px;background:linear-gradient(90deg,#3AA0F2,#1D7CE0);border-radius:2px 0 0 2px"></div>
<div class="t " style="left:1229.8px;top:518.00px;font-size:8px;line-height:8px;color:#5A636C;letter-spacing:-0.062px;">5%</div>
<div class="t " style="left:1077.2px;top:533.00px;font-size:8px;line-height:8px;color:#3A4450;font-weight:bold;letter-spacing:-0.359px;">RAM</div>
<div class="a" style="left:1129.3px;top:530.9px;width:93.6px;height:9.9px;background:#CDD3DB;border-radius:2px"></div>
<div class="a" style="left:1129.3px;top:530.9px;width:25.2px;height:9.9px;background:linear-gradient(90deg,#3AA0F2,#1D7CE0);border-radius:2px 0 0 2px"></div>
<div class="t " style="left:1229.8px;top:533.00px;font-size:8px;line-height:8px;color:#5A636C;letter-spacing:0.344px;">27%</div>
<div class="t " style="left:1078.4px;top:548.00px;font-size:8px;line-height:8px;color:#3A4450;font-weight:bold;letter-spacing:-0.221px;">LAN</div>
<svg width="4" height="3" style="left:1098.7px;top:551.6px" viewBox="0 0 4 3"><path d="M0,0 L4,0 L2,2.4 Z" fill="#3A4450"/></svg>
<svg width="7" height="8" style="left:1131.3px;top:547.5px" viewBox="0 0 7 8"><path d="M3.5,0 L7,3.6 L4.8,3.6 L4.8,8 L2.2,8 L2.2,3.6 L0,3.6 Z" fill="#1A84E4"/></svg>
<div class="t " style="left:1139.4px;top:549.00px;font-size:8.4px;line-height:8.4px;color:#1A84E4;letter-spacing:-0.029px;">2 KB/s</div>
<svg width="7" height="8" style="left:1176.2px;top:547.5px" viewBox="0 0 7 8"><path d="M3.5,8 L7,4.4 L4.8,4.4 L4.8,0 L2.2,0 L2.2,4.4 L0,4.4 Z" fill="#26A51A"/></svg>
<div class="t " style="left:1184.6px;top:549.00px;font-size:8.4px;line-height:8.4px;color:#26A51A;letter-spacing:0.031px;">2 KB/s</div>
<div class="a" style="left:1128.6px;top:565.7px;width:130.6px;height:43px;background:#fff"></div>
<div class="a" style="left:1128.6px;top:574.3px;width:130.6px;height:1px;background:#EBEEF2"></div>
<div class="a" style="left:1128.6px;top:582.7px;width:130.6px;height:1px;background:#EBEEF2"></div>
<div class="a" style="left:1128.6px;top:591px;width:130.6px;height:1px;background:#EBEEF2"></div>
<div class="a" style="left:1128.6px;top:599.3px;width:130.6px;height:1px;background:#EBEEF2"></div>
<div class="t " style="left:1110px;top:564.00px;font-size:7.6px;line-height:7.6px;color:#5A636C;letter-spacing:0.160px;">100</div>
<div class="t " style="left:1114.4px;top:572.00px;font-size:7.6px;line-height:7.6px;color:#5A636C;letter-spacing:0.146px;">80</div>
<div class="t " style="left:1114.4px;top:580.00px;font-size:7.6px;line-height:7.6px;color:#5A636C;letter-spacing:0.146px;">60</div>
<div class="t " style="left:1114.4px;top:589.00px;font-size:7.6px;line-height:7.6px;color:#5A636C;letter-spacing:0.146px;">40</div>
<div class="t " style="left:1114.4px;top:597.00px;font-size:7.6px;line-height:7.6px;color:#5A636C;letter-spacing:0.146px;">20</div>
<div class="t " style="left:1118.7px;top:605.00px;font-size:7.6px;line-height:7.6px;color:#5A636C;">0</div>
<svg width="131" height="12" style="left:1128.6px;top:598px" viewBox="0 0 131 12">
<path d="M0,9.4 L3,7.6 L6,7 L10,8.2 L20,8.6 L28,8.8 L34,8.2 L40,8.8 L50,9.2 L60,9.4 L68,8.4 L74,9.2 L84,9.4 L94,9 L100,7.4 L106,9 L116,9.2 L124,9.4 L130,9.2 L130,9.8 L120,10 L112,9.6 L102,9.8 L92,9.8 L82,10 L72,10 L62,10 L52,10 L42,10.2 L34,9.4 L24,9.6 L14,9.4 L6,9 L0,10.2 Z" fill="#2EA51E"/>
<path d="M0,10.2 L6,9 L14,9.4 L24,9.6 L34,9.4 L42,10.2 L52,10 L62,10 L72,10 L82,10 L92,9.8 L102,9.8 L112,9.6 L120,10 L130,9.4" fill="none" stroke="#1A84E4" stroke-width="1.2"/></svg>
</body></html>
